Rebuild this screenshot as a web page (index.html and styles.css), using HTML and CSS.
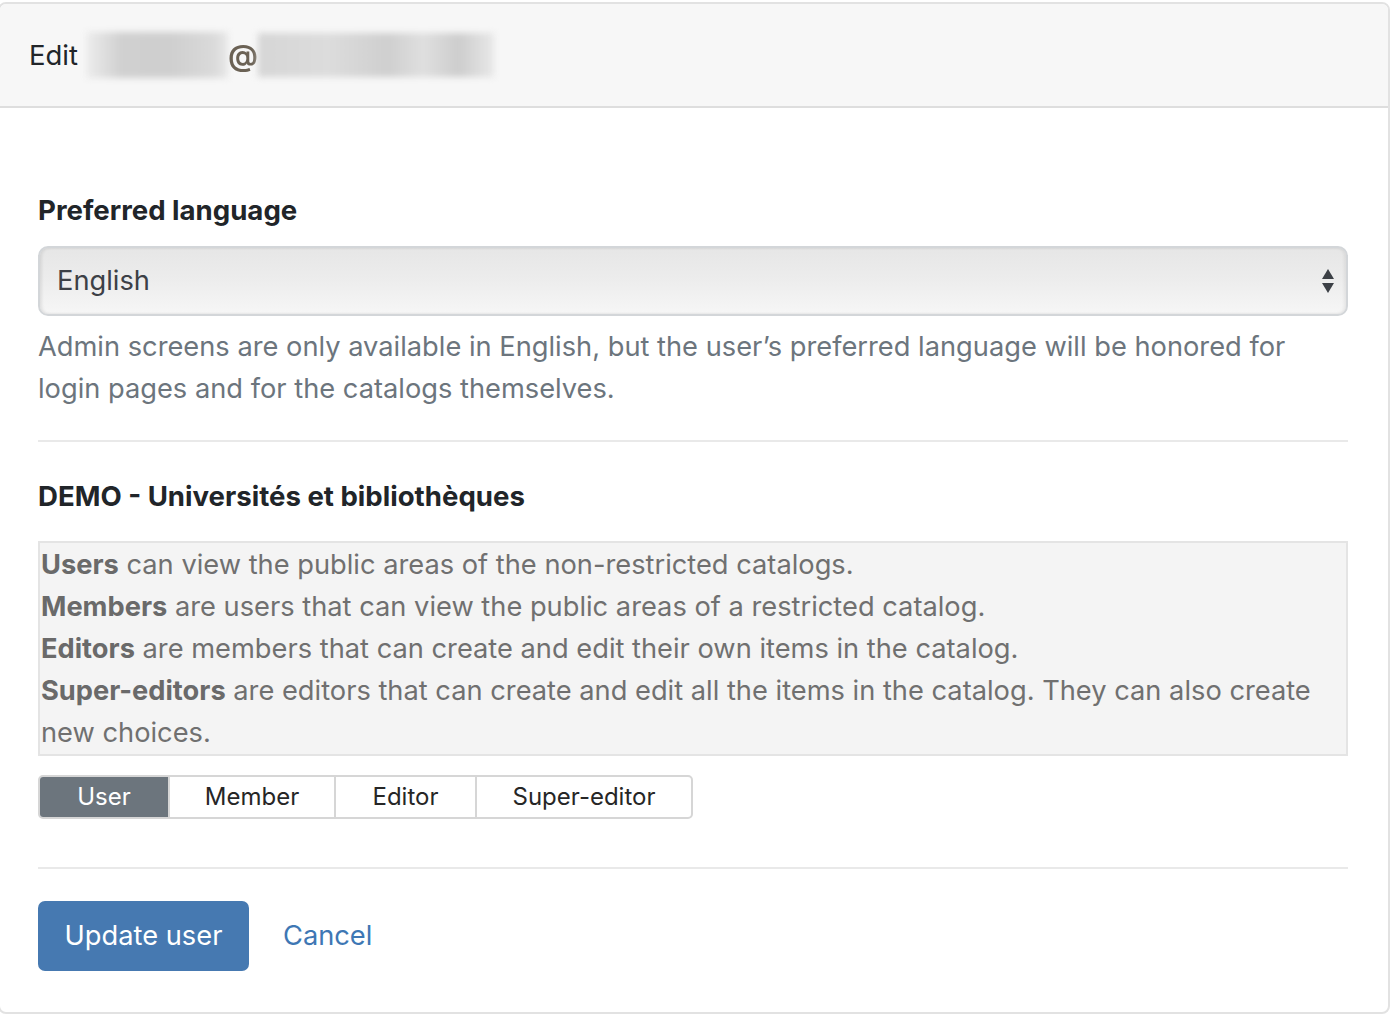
FILE: index.html
```html
<!DOCTYPE html>
<html lang="en">
<head>
<meta charset="utf-8">
<title>Edit user</title>
<link rel="stylesheet" href="styles.css">
</head>
<body>
<div class="card">
  <div class="card-header">
    <span class="edit">Edit</span>
    <span class="email">
      <span class="blur-a"></span>
      <span class="at">@</span>
      <span class="blur-b"></span>
    </span>
  </div>
  <div class="card-body">
    <label class="label">Preferred language</label>
    <div class="select">
      <span>English</span>
      <svg class="arrows" width="14" height="26" viewBox="0 0 14 26"><path d="M7 1 L13 11 H1 Z" fill="#3c4046"/><path d="M1 15 H13 L7 25 Z" fill="#3c4046"/></svg>
    </div>
    <p class="help">Admin screens are only available in English, but the user’s preferred language will be honored for login pages and for the catalogs themselves.</p>
    <hr class="rule">
    <h3 class="section">DEMO - Universités et bibliothèques</h3>
    <div class="roles">
      <div><b>Users</b> can view the public areas of the non-restricted catalogs.</div>
      <div><b>Members</b> are users that can view the public areas of a restricted catalog.</div>
      <div><b>Editors</b> are members that can create and edit their own items in the catalog.</div>
      <div><b>Super-editors</b> are editors that can create and edit all the items in the catalog. They can also create new choices.</div>
    </div>
    <div class="btn-group">
      <span class="seg seg-user active">User</span>
      <span class="seg seg-member">Member</span>
      <span class="seg seg-editor">Editor</span>
      <span class="seg seg-super">Super-editor</span>
    </div>
    <hr class="rule rule-2">
    <div class="actions">
      <span class="btn-primary">Update user</span>
      <span class="cancel">Cancel</span>
    </div>
  </div>
</div>
</body>
</html>
```

FILE: styles.css
```css
* { box-sizing: border-box; }
html, body { margin: 0; padding: 0; background: #fff; }
body {
  font-family: Inter, "Noto Sans", "Liberation Sans", sans-serif;
  font-size: 27.25px;
  line-height: 42px;
  color: #212529;
}
.card {
  margin: 2px 6px 0 -2px;
  border: 2px solid #e2e2e2;
  border-radius: 8px;
  height: 1012px;
  overflow: hidden;
}
.card-header {
  background: #f7f7f7;
  border-bottom: 2px solid #dedede;
  height: 104px;
  display: flex;
  align-items: center;
  padding-left: 29px;
}
.edit { margin-right: 8px; font-size: 27.5px; }
.email {
  display: flex;
  align-items: center;
  height: 46px;
  position: relative;
}
.blur-a {
  display: block;
  width: 142px;
  height: 46px;
  background: linear-gradient(90deg, #ededed 0%, #d0d0d0 25%, #cfcfcf 60%, #dadada 90%, #e8e8e8 100%);
  filter: blur(3px);
}
.blur-b {
  display: block;
  width: 236px;
  height: 44px;
  background: linear-gradient(90deg, #d6d6d6 0%, #dcdcdc 30%, #cfcfcf 55%, #dfdfdf 70%, #cdcdcd 85%, #e8e8e8 100%);
  filter: blur(3px);
}
.at {
  font-size: 30px;
  font-weight: 600;
  color: #6b6255;
  width: 30px;
  text-align: center;
  filter: blur(0.6px);
}
.card-body {
  padding: 81px 40px 0 38px;
}
.label {
  display: block;
  font-weight: 700;
  font-size: 27.6px;
  margin: 0;
}
.select {
  margin-top: 15px;
  height: 70px;
  border: 2px solid #d3d6d9;
  border-radius: 10px;
  background: linear-gradient(180deg, #e6e6e6 0%, #ececec 45%, #f6f6f6 100%);
  box-shadow: inset 2px 0 3px rgba(0,0,0,0.08), inset -2px 0 3px rgba(0,0,0,0.06);
  display: flex;
  align-items: center;
  justify-content: space-between;
  padding: 0 11px 0 17px;
  color: #3c4046;
}
.arrows { display: block; }
.help {
  margin: 10px 0 0 0;
  color: #6c757d;
}
.rule {
  border: 0;
  border-top: 2px solid #e9e9e9;
  margin: 30px 0 0 0;
}
.section {
  margin: 33px 0 0 0;
  font-size: 27.6px;
  font-weight: 700;
  line-height: 42px;
}
.roles {
  margin-top: 24px;
  background: #f4f4f4;
  border: 2px solid #e4e4e4;
  padding: 1px 2px 0 1px;
  color: #707070;
}
.roles b { color: #6a6a6a; }
.btn-group {
  margin-top: 19px;
  display: flex;
  height: 44px;
  width: 655px;
  border: 2px solid #d6d6d6;
  border-radius: 5px;
  overflow: hidden;
  font-size: 24px;
  line-height: 40px;
}
.seg {
  display: flex;
  align-items: center;
  justify-content: center;
  border-left: 2px solid #d6d6d6;
  color: #262626;
}
.seg-user { width: 128px; border-left: 0; }
.seg-member { width: 166px; }
.seg-editor { width: 141px; }
.seg-super { flex: 1; }
.active { background: #6c757d; color: #fff; }
.rule-2 { margin-top: 48px; }
.actions {
  margin-top: 32px;
  display: flex;
  align-items: center;
}
.btn-primary {
  display: flex;
  align-items: center;
  justify-content: center;
  width: 211px;
  height: 70px;
  background: #4679b1;
  color: #fff;
  border-radius: 7px;
}
.cancel {
  margin-left: 34px;
  color: #3e77b4;
}
```
